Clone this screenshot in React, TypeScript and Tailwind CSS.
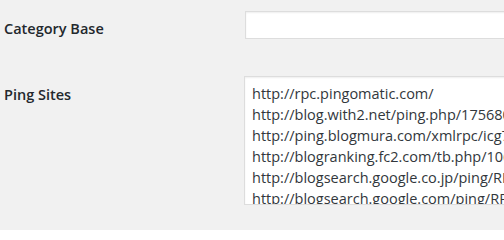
const pingSites = [
  'http://rpc.pingomatic.com/',
  'http://blog.with2.net/ping.php/1756804/1379986329',
  'http://ping.blogmura.com/xmlrpc/icg7pyq2hd3s',
  'http://blogranking.fc2.com/tb.php/1065498',
  'http://blogsearch.google.co.jp/ping/RPC2',
  'http://blogsearch.google.com/ping/RPC2',
  'http://ping.fc2.com/',
];

export default function App() {
  return (
    <div
      className="h-[230px] w-[504px] overflow-hidden bg-[#f1f1f1] text-[14.5px] text-[#23282d]"
      style={{ fontFamily: '"Open Sans", "Noto Sans", sans-serif' }}
    >
      <div className="flex pt-[11px]">
        <div className="w-[245px] shrink-0 pl-[4px] pt-[8px] font-semibold leading-[20px]">
          Category Base
        </div>
        <div className="h-[28px] w-[400px] shrink-0 border border-[#dddddd] bg-white shadow-[inset_0_1px_2px_rgba(0,0,0,0.07)]" />
      </div>

      <div className="mt-[37px] flex">
        <div className="w-[244px] shrink-0 pl-[4px] pt-[9px] font-semibold leading-[20px]">
          Ping Sites
        </div>
        <div className="h-[129px] w-[420px] shrink-0 overflow-hidden border border-[#dddddd] bg-white px-[7px] pt-[6px] text-[#32373c] shadow-[inset_0_1px_2px_rgba(0,0,0,0.07)]">
          {pingSites.map((site) => (
            <div key={site} className="whitespace-pre leading-[21px]">
              {site}
            </div>
          ))}
        </div>
      </div>
    </div>
  );
}
